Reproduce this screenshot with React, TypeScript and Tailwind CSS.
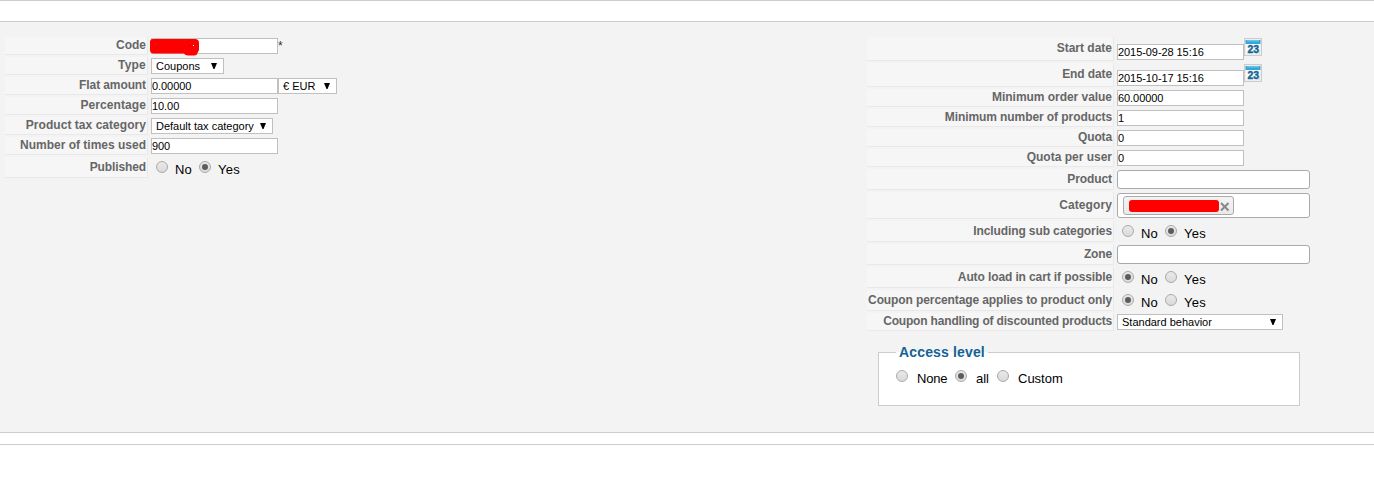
import React from "react";

type RowProps = { label: string; height: string; labelWidth: string; tracking?: string; children: React.ReactNode };

function Row({ label, height, labelWidth, tracking = "", children }: RowProps) {
  return (
    <div className={`flex ${height}`}>
      <div
        className={`${labelWidth} ${tracking} flex shrink-0 items-center justify-end whitespace-nowrap border-r border-b border-[#e9e9e9] bg-[#f6f6f6] pr-px pb-px text-[12px] leading-[14px] font-bold text-[#666]`}
      >
        {label}
      </div>
      <div className="flex items-start pt-px pl-[3px]">{children}</div>
    </div>
  );
}

function TextInput({ value, className = "" }: { value: string; className?: string }) {
  return (
    <input
      defaultValue={value}
      className={`h-4 w-[127px] border border-[#c0c0c0] bg-white pb-px text-[11px] leading-[13px] tracking-[-0.07px] text-black outline-none ${className}`}
    />
  );
}

function Select({ value, width }: { value: string; width: string }) {
  return (
    <button
      className={`${width} flex h-4 items-center justify-between border border-[#c0c0c0] bg-white pt-px pr-1.5 pl-1 text-[11px] leading-[13px] whitespace-nowrap text-black`}
    >
      <span>{value}</span>
      <svg width="6" height="6" viewBox="0 0 6 6" className="mb-px">
        <path d="M0 0H6L3.500 6H2.500Z" fill="#000" />
      </svg>
    </button>
  );
}

function Radio({ checked = false }: { checked?: boolean }) {
  return (
    <span className="flex size-3 shrink-0 items-center justify-center rounded-full border border-[#aaa] bg-linear-to-b from-[#e9e9e9] to-[#dadada]">
      {checked && <span className="size-1.5 rounded-full bg-[#5c5c5c]" />}
    </span>
  );
}

function YesNo({ yes }: { yes: boolean }) {
  return (
    <div className="flex pt-[3px] pl-[5px] text-[13px] leading-[15px] text-black">
      <Radio checked={!yes} />
      <span className="mt-px w-[31px] pl-[7px]">No</span>
      <Radio checked={yes} />
      <span className="mt-px pl-[7px] tracking-[0.3px]">Yes</span>
    </div>
  );
}

function Calendar() {
  return (
    <svg width="18" height="18" viewBox="0 0 18 18" className="shrink-0">
      <rect width="18" height="18" fill="#ccc" />
      <rect x="1" y="1" width="16" height="16" fill="#eee" />
      <path d="M2 5H16V16H2Z" fill="#f9fbfc" />
      <path d="M11 16L16 11V16Z" fill="#dfe3e5" />
      <rect x="1.500" y="2" width="15" height="4" rx="0.5" fill="#35a5dc" />
      <rect x="3" y="2" width="12" height="1.500" fill="#66c4ef" />
      <text x="9.200" y="15" textAnchor="middle" textLength="11.500" lengthAdjust="spacingAndGlyphs" fontFamily="Liberation Sans" fontWeight="bold" fontSize="10" fill="#126491" stroke="#126491" strokeWidth="0.4">
        23
      </text>
    </svg>
  );
}

function DateField({ value }: { value: string }) {
  return (
    <>
      <TextInput value={value} className="mt-1.5" />
      <Calendar />
    </>
  );
}

const box = "w-[193px] rounded-[3px] border border-[#aaa] bg-white";
const L = "w-[143px]";
const R = "w-[247px]";

export default function App() {
  return (
    <div className="h-[479px] w-[1374px] overflow-hidden bg-white font-['Liberation_Sans',Arial,sans-serif]">
      <div className="h-[22px] border-y border-[#ccc]" />
      <div className="flex h-[411px] border-b border-[#ccc] bg-[#f3f3f3] pt-[15px] pl-[5px]">
        <div className="flex w-[862px] flex-col gap-0.5">
          <Row label="Code" height="h-[18px]" labelWidth={L}>
            <div className="relative flex">
              <TextInput value="" />
              <svg className="absolute top-0 -left-px" width="50" height="18" viewBox="0 0 50 18">
                <path d="M3 1H45Q49 1 49 5V12Q48 14 47.500 15Q47 17.500 44 17.500H38Q35 17.500 34 15.500H3Q0 15 0 12V4Q0 1 3 1Z" fill="#f00" />
                <path d="M4 6.500H6" stroke="#a33" />
                <path d="M43 7.500H44" stroke="#fff" />
                <path d="M39 7.500H40" stroke="#900" />
              </svg>
            </div>
            <span className="text-[12px] leading-4 text-[#333]">*</span>
          </Row>
          <Row label="Type" height="h-[18px]" labelWidth={L} tracking="tracking-[0.2px]"><Select value="Coupons" width="w-[73px]" /></Row>
          <Row label="Flat amount" height="h-[18px]" labelWidth={L} tracking="tracking-[-0.1px]">
            <TextInput value="0.00000" />
            <Select value="€ EUR" width="w-[59px]" />
          </Row>
          <Row label="Percentage" height="h-[18px]" labelWidth={L} tracking="tracking-[0.08px]"><TextInput value="10.00" /></Row>
          <Row label="Product tax category" height="h-[18px]" labelWidth={L} tracking="tracking-[0.04px]"><Select value="Default tax category" width="w-[122px]" /></Row>
          <Row label="Number of times used" height="h-[18px]" labelWidth={L}><TextInput value="900" /></Row>
          <Row label="Published" height="h-[21px]" labelWidth={L} tracking="tracking-[-0.12px]"><YesNo yes /></Row>
        </div>
        <div>
          <div className="flex flex-col gap-0.5">
            <Row label="Start date" height="h-6" labelWidth={R}><DateField value="2015-09-28 15:16" /></Row>
            <Row label="End date" height="h-6" labelWidth={R} tracking="tracking-[-0.1px]"><DateField value="2015-10-17 15:16" /></Row>
            <Row label="Minimum order value" height="h-[18px]" labelWidth={R} tracking="tracking-[-0.04px]"><TextInput value="60.00000" /></Row>
            <Row label="Minimum number of products" height="h-[18px]" labelWidth={R} tracking="tracking-[-0.08px]"><TextInput value="1" /></Row>
            <Row label="Quota" height="h-[18px]" labelWidth={R} tracking="tracking-[-0.15px]"><TextInput value="0" /></Row>
            <Row label="Quota per user" height="h-[18px]" labelWidth={R}><TextInput value="0" /></Row>
            <Row label="Product" height="h-[21px]" labelWidth={R} tracking="tracking-[-0.1px]"><div className={`${box} h-[19px]`} /></Row>
            <Row label="Category" height="h-[27px]" labelWidth={R} tracking="tracking-[0.1px]">
              <div className={`${box} flex h-[25px] pt-0.5 pl-[5px]`}>
                <div className="flex h-[19px] w-[111px] items-center rounded-[3px] border border-[#aaa] bg-linear-to-b from-[#f3f3f3] to-[#eaeaea] pl-[5px]">
                  <span className="mt-px h-3 w-[90px] rounded-[3px] bg-[#f00]" />
                  <svg width="10" height="10" viewBox="0 0 10 10" className="mt-[3px] ml-px">
                    <path d="M1 1L8.500 8.500M8.500 1L1 8.500" stroke="#888" strokeWidth="2" />
                  </svg>
                </div>
              </div>
            </Row>
            <Row label="Including sub categories" height="h-[21px]" labelWidth={R} tracking="tracking-[-0.11px]"><YesNo yes /></Row>
            <Row label="Zone" height="h-[21px]" labelWidth={R} tracking="tracking-[-0.15px]"><div className={`${box} h-[19px]`} /></Row>
            <Row label="Auto load in cart if possible" height="h-[21px]" labelWidth={R} tracking="tracking-[-0.11px]"><YesNo yes={false} /></Row>
            <Row label="Coupon percentage applies to product only" height="h-[21px]" labelWidth={R} tracking="tracking-[-0.1px]"><YesNo yes={false} /></Row>
            <Row label="Coupon handling of discounted products" height="h-[18px]" labelWidth={R} tracking="tracking-[-0.17px]"><Select value="Standard behavior" width="w-[166px]" /></Row>
          </div>
          <fieldset className="mt-[13px] ml-[11px] h-[62px] w-[422px] border border-[#ccc] bg-white pl-[17px]">
            <legend className="h-4 w-[92px] bg-linear-to-b from-[#f3f3f3] from-50% to-white to-50% pl-[3px] text-[14px] leading-4 font-bold tracking-[0.15px] whitespace-nowrap text-[#146295]">
              Access level
            </legend>
            <div className="flex pt-[10px] text-[13px] leading-[15px] text-black">
              <Radio />
              <span className="mt-px w-[47px] pl-[9px] tracking-[-0.2px]">None</span>
              <Radio checked />
              <span className="mt-px w-[30px] pl-[9px]">all</span>
              <Radio />
              <span className="mt-px pl-[9px]">Custom</span>
            </div>
          </fieldset>
        </div>
      </div>
      <div className="h-3 border-b border-[#ccc]" />
    </div>
  );
}
